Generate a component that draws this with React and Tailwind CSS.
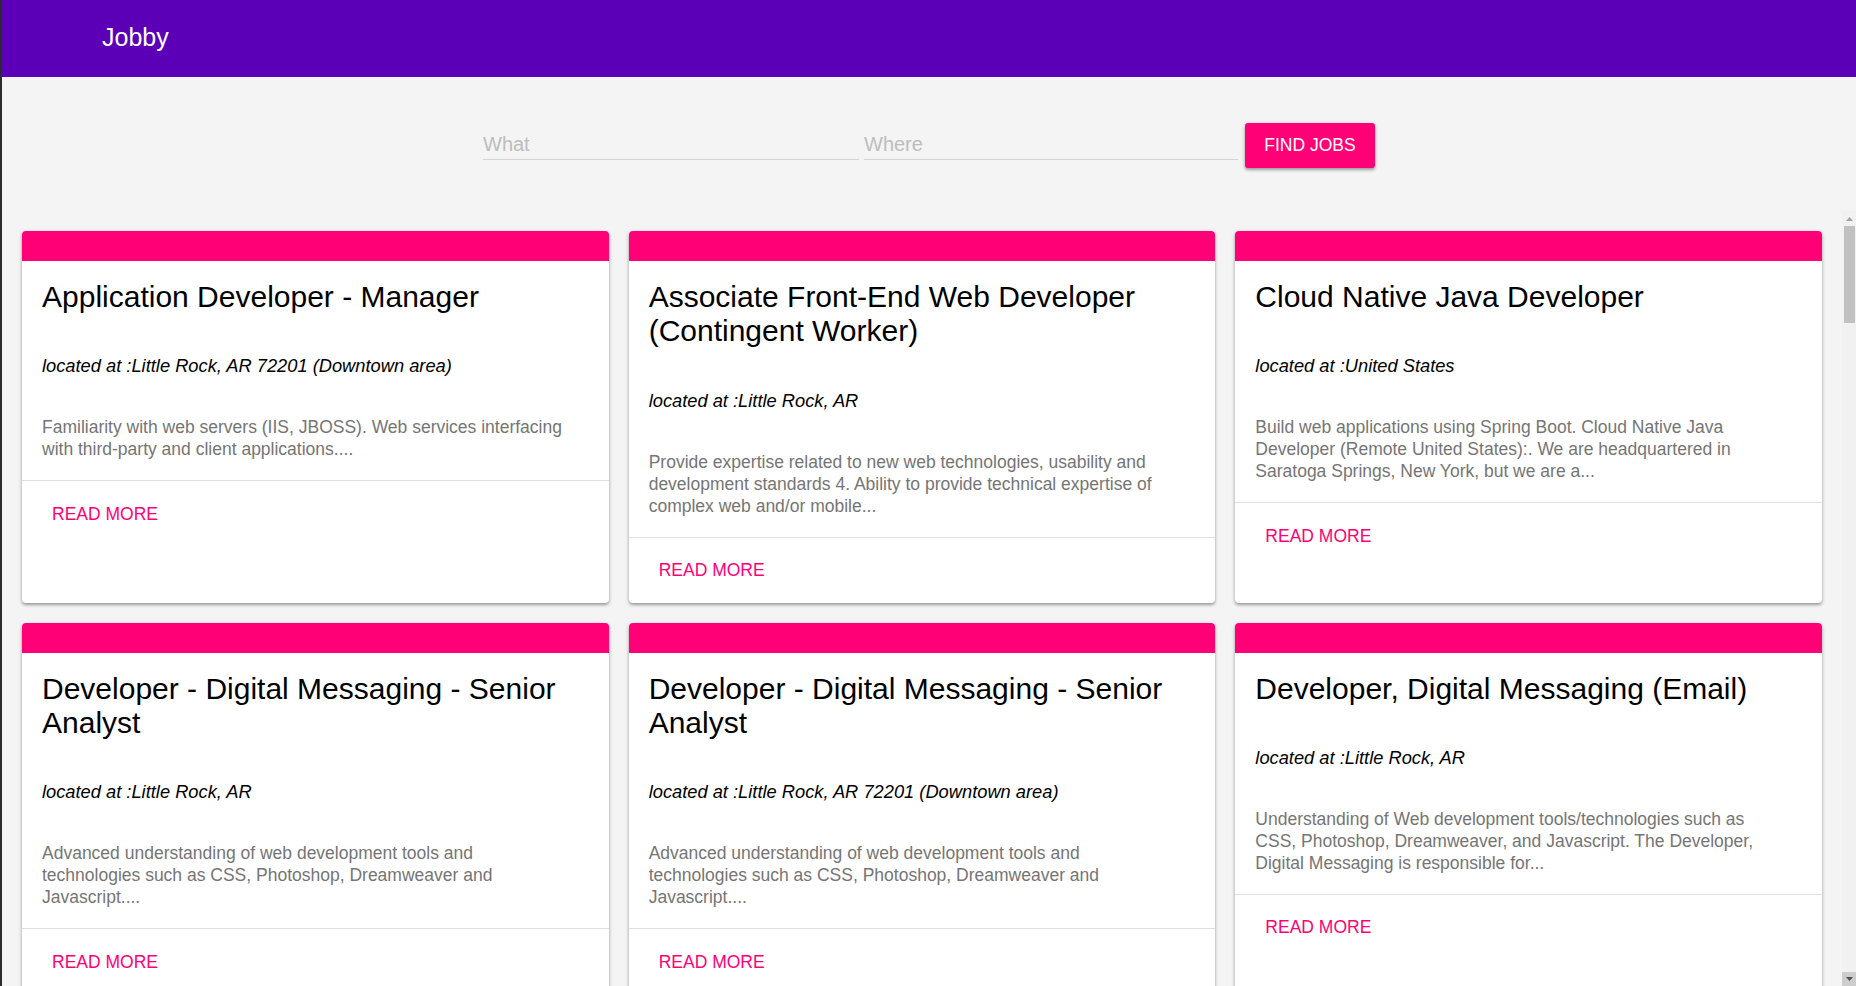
import React from "react";

const jobs = [
  {
    title: "Application Developer - Manager",
    location: "Little Rock, AR 72201 (Downtown area)",
    summary:
      "Familiarity with web servers (IIS, JBOSS). Web services interfacing with third-party and client applications....",
  },
  {
    title: "Associate Front-End Web Developer (Contingent Worker)",
    location: "Little Rock, AR",
    summary:
      "Provide expertise related to new web technologies, usability and development standards 4. Ability to provide technical expertise of complex web and/or mobile...",
  },
  {
    title: "Cloud Native Java Developer",
    location: "United States",
    summary:
      "Build web applications using Spring Boot. Cloud Native Java Developer (Remote United States):. We are headquartered in Saratoga Springs, New York, but we are a...",
  },
  {
    title: "Developer - Digital Messaging - Senior Analyst",
    location: "Little Rock, AR",
    summary:
      "Advanced understanding of web development tools and technologies such as CSS, Photoshop, Dreamweaver and Javascript....",
  },
  {
    title: "Developer - Digital Messaging - Senior Analyst",
    location: "Little Rock, AR 72201 (Downtown area)",
    summary:
      "Advanced understanding of web development tools and technologies such as CSS, Photoshop, Dreamweaver and Javascript....",
  },
  {
    title: "Developer, Digital Messaging (Email)",
    location: "Little Rock, AR",
    summary:
      "Understanding of Web development tools/technologies such as CSS, Photoshop, Dreamweaver, and Javascript. The Developer, Digital Messaging is responsible for...",
  },
  {
    title: "Front End Developer",
    location: "Little Rock, AR",
    summary:
      "Experience building responsive web applications with HTML, CSS and JavaScript. Work closely with designers and back-end developers to...",
  },
  {
    title: "Full Stack Web Developer",
    location: "Conway, AR",
    summary:
      "Design, build and maintain web applications using Node.js and React. Write clean, testable code and take part in code reviews....",
  },
  {
    title: "Java Developer",
    location: "North Little Rock, AR",
    summary:
      "Develop and support enterprise Java applications. Knowledge of Spring, Hibernate and RESTful web services is required....",
  },
  {
    title: "Junior Software Engineer",
    location: "Little Rock, AR 72202",
    summary:
      "Assist senior engineers in the design and development of software solutions. Bachelor's degree in Computer Science or related field...",
  },
  {
    title: "Senior .NET Developer",
    location: "Little Rock, AR",
    summary:
      "Build and maintain applications using C#, ASP.NET MVC and SQL Server. Mentor junior developers and participate in architecture...",
  },
  {
    title: "Software Developer II",
    location: "Bryant, AR",
    summary:
      "Responsible for developing, testing and deploying software applications. Experience with web services and relational databases....",
  },
  {
    title: "UI Developer",
    location: "Remote",
    summary:
      "Translate designs into high quality code. Strong knowledge of JavaScript, CSS and modern front-end frameworks such as Angular or React...",
  },
  {
    title: "Web Application Developer",
    location: "Little Rock, AR 72201 (Downtown area)",
    summary:
      "Develop web applications using PHP, MySQL and JavaScript. Maintain existing applications and troubleshoot issues as they arise....",
  },
  {
    title: "Web Developer",
    location: "Benton, AR",
    summary:
      "Create and maintain websites for clients. Experience with WordPress, HTML, CSS and basic graphic design tools is a plus....",
  },
];

// fill the list so the scroll area has as many rows as the original
const allJobs = [...jobs, ...jobs, ...jobs];

export default function App() {
  return (
    <div className="h-screen flex flex-col bg-[#f4f4f4] border-l-2 border-[#2b2b2b] font-['Liberation_Sans',Arial,sans-serif] overflow-hidden">
      <header className="h-[77px] shrink-0 bg-[#5b00b7] flex items-center pl-[100px] pb-[2px]">
        <span className="text-white text-[25px]">Jobby</span>
      </header>

      <SearchBar />

      <div className="flex-1 min-h-0 flex">
        <div className="flex-1 overflow-y-auto [scrollbar-width:none]">
          <div className="grid grid-cols-3 gap-[20px] px-[20px] pt-[20px] pb-[20px]">
            {allJobs.map((job, i) => (
              <JobCard key={i} {...job} />
            ))}
          </div>
        </div>
        <ScrollTrack />
      </div>
    </div>
  );
}

function SearchBar() {
  return (
    <div className="shrink-0 h-[134px] pt-[46px] flex justify-center items-start">
      <input
        placeholder="What"
        className="w-[376px] h-[37px] pt-[7px] bg-transparent border-b border-[#d4d4d4] outline-none text-[20px] text-black placeholder:text-[#bdbdbd]"
      />
      <input
        placeholder="Where"
        className="w-[374px] h-[37px] pt-[7px] ml-[5px] bg-transparent border-b border-[#d4d4d4] outline-none text-[20px] text-black placeholder:text-[#bdbdbd]"
      />
      <button className="ml-[7px] w-[130px] h-[45px] rounded-[3px] bg-[#ff0077] text-white text-[17.5px] uppercase shadow-[0_2px_3px_rgba(0,0,0,0.3),0_1px_5px_rgba(0,0,0,0.12)]">
        Find Jobs
      </button>
    </div>
  );
}

// the list's own scrollbar, as it shows in the screenshot
function ScrollTrack() {
  return (
    <div className="w-[14px] shrink-0 bg-[#f1f1f1] flex flex-col">
      <div className="h-[15px] flex items-center justify-center">
        <svg width="7" height="4" viewBox="0 0 7 4">
          <path d="M3.5 0 L7 4 L0 4 Z" fill="#a3a3a3" />
        </svg>
      </div>
      <div className="h-[97px] ml-[2px] mr-[1px] bg-[#c1c1c1]" />
      <div className="flex-1" />
      <div className="h-[14px] bg-[#cdcdcd] flex items-center justify-center">
        <svg width="7" height="4" viewBox="0 0 7 4">
          <path d="M0 0 L7 0 L3.5 4 Z" fill="#505050" />
        </svg>
      </div>
    </div>
  );
}

function JobCard({ title, location, summary }) {
  return (
    <div className="bg-white rounded-[4px] overflow-hidden flex flex-col shadow-[0_2px_3px_rgba(0,0,0,0.3),0_1px_5px_rgba(0,0,0,0.12)]">
      <div className="h-[30px] bg-[#ff0077]" />
      <div className="px-[20px] pt-[19px] pb-[20px] border-b border-[#e0e0e0]">
        <h2 className="text-[30px] leading-[34.3px] text-black">{title}</h2>
        <p className="mt-[41px] text-[18.3px] leading-[21px] italic text-black">located at :{location}</p>
        <p className="mt-[40px] pr-[20px] text-[17.5px] leading-[22px] text-[#757575]">{summary}</p>
      </div>
      <div className="h-[65px] flex items-center pl-[30px]">
        <button className="text-[17.5px] uppercase text-[#ff0077]">Read More</button>
      </div>
    </div>
  );
}
